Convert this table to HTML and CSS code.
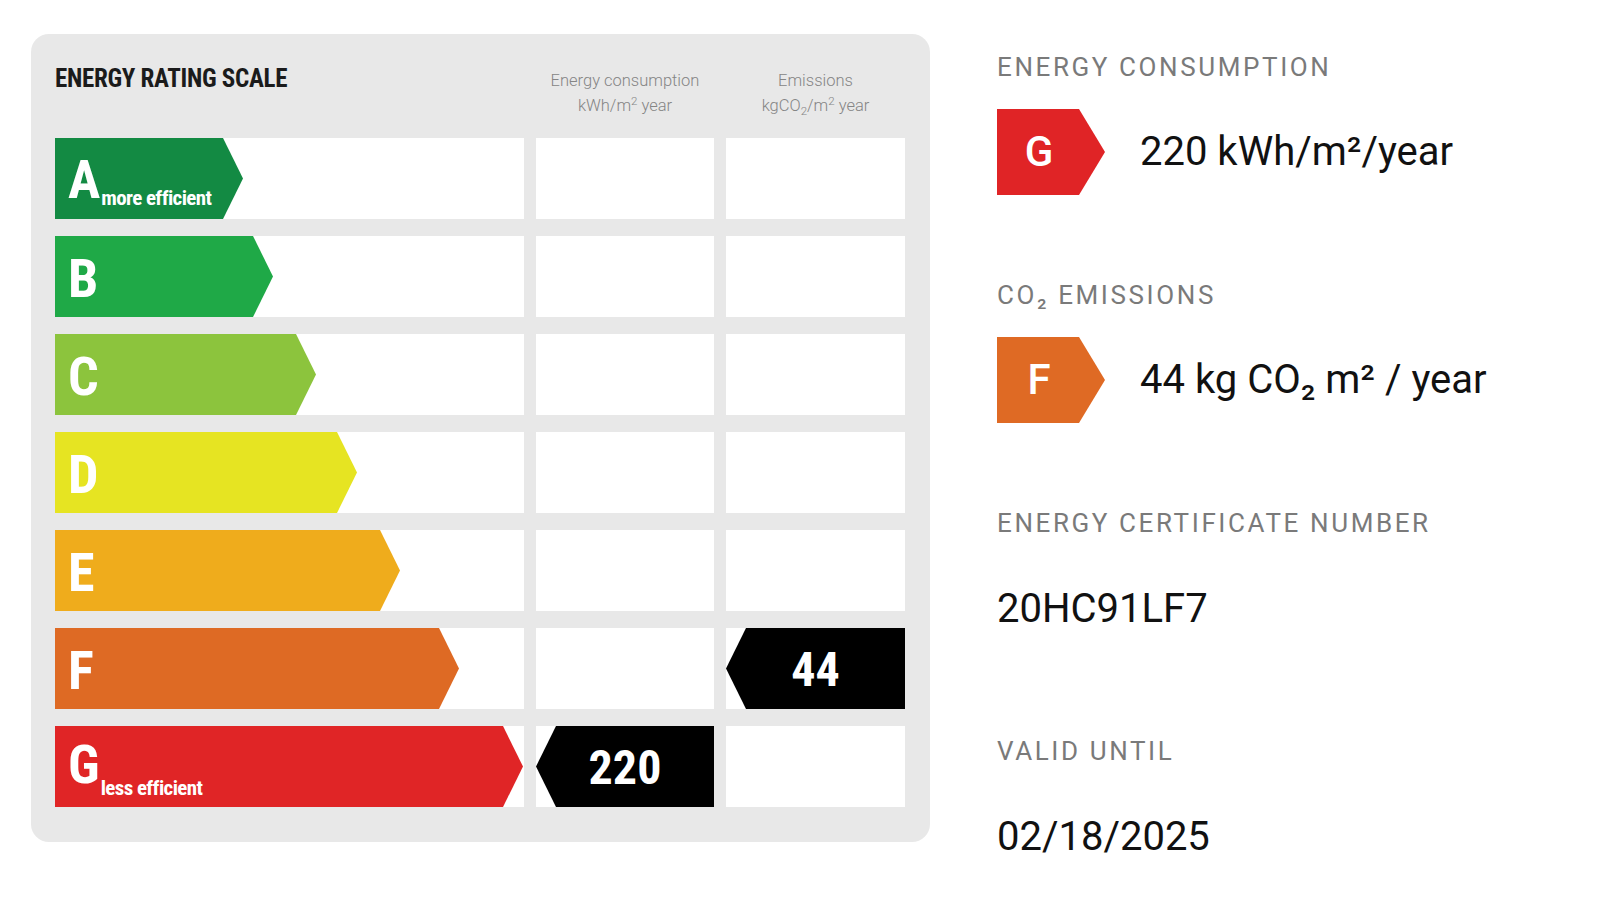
FILE: index.html
```html
<!DOCTYPE html>
<html lang="en">
<head>
<meta charset="utf-8">
<title>Energy rating</title>
<link rel="stylesheet" href="styles.css">
</head>
<body>
<div class="page">
  <section class="scale">
    <div class="scale-head">
      <h2 class="scale-title">ENERGY RATING SCALE</h2>
      <div class="col-head">Energy consumption<br>kWh/m<sup>2</sup> year</div>
      <div class="col-head">Emissions<br>kgCO<sub>2</sub>/m<sup>2</sup> year</div>
    </div>
    <div class="scale-grid">
      <div class="cell"><div class="bar bar-a"><div class="mark"><span class="grade">A</span><span class="note">more efficient</span></div></div></div>
      <div class="cell"></div>
      <div class="cell"></div>

      <div class="cell"><div class="bar bar-b"><div class="mark"><span class="grade">B</span></div></div></div>
      <div class="cell"></div>
      <div class="cell"></div>

      <div class="cell"><div class="bar bar-c"><div class="mark"><span class="grade">C</span></div></div></div>
      <div class="cell"></div>
      <div class="cell"></div>

      <div class="cell"><div class="bar bar-d"><div class="mark"><span class="grade">D</span></div></div></div>
      <div class="cell"></div>
      <div class="cell"></div>

      <div class="cell"><div class="bar bar-e"><div class="mark"><span class="grade">E</span></div></div></div>
      <div class="cell"></div>
      <div class="cell"></div>

      <div class="cell"><div class="bar bar-f"><div class="mark"><span class="grade">F</span></div></div></div>
      <div class="cell"></div>
      <div class="cell"><div class="tag">44</div></div>

      <div class="cell"><div class="bar bar-g"><div class="mark"><span class="grade">G</span><span class="note note-low">less efficient</span></div></div></div>
      <div class="cell"><div class="tag">220</div></div>
      <div class="cell"></div>
    </div>
  </section>

  <aside class="summary">
    <div class="info">
      <div class="label">ENERGY CONSUMPTION</div>
      <div class="reading">
        <div class="badge badge-g">G</div>
        <div class="value">220 kWh/m²/year</div>
      </div>
    </div>
    <div class="info">
      <div class="label">CO₂ EMISSIONS</div>
      <div class="reading">
        <div class="badge badge-f">F</div>
        <div class="value">44 kg CO₂ m² / year</div>
      </div>
    </div>
    <div class="info">
      <div class="label">ENERGY CERTIFICATE NUMBER</div>
      <div class="value value-plain">20HC91LF7</div>
    </div>
    <div class="info info-last">
      <div class="label">VALID UNTIL</div>
      <div class="value value-plain">02/18/2025</div>
    </div>
  </aside>
</div>
</body>
</html>
```

FILE: styles.css
```css
* { box-sizing: border-box; }

html, body {
  margin: 0;
  padding: 0;
  background: #ffffff;
}

body {
  font-family: Roboto, "Liberation Sans", sans-serif;
  color: #111;
}

.page {
  display: flex;
  align-items: flex-start;
  padding: 34px 0 0 31px;
}

/* ---------- rating scale panel ---------- */
.scale {
  width: 899px;
  background: #e8e8e8;
  border-radius: 18px;
  padding: 0 25px 35px 24px;
}

.scale-head {
  display: grid;
  grid-template-columns: 469px 178px 179px;
  column-gap: 12px;
  height: 104px;
  align-items: start;
}

.scale-title {
  margin: 0;
  padding-top: 29px;
  font-family: "Liberation Sans Narrow", "Roboto Condensed", "DejaVu Sans Condensed", "Liberation Sans", sans-serif;
  font-stretch: condensed;
  font-weight: 700;
  font-size: 25px;
  line-height: 32px;
  letter-spacing: -0.3px;
  color: #1b1b1b;
}

.col-head {
  padding-top: 34px;
  text-align: center;
  font-family: Roboto, "Liberation Sans", sans-serif;
  font-weight: 300;
  font-size: 16.5px;
  line-height: 25px;
  color: #858585;
}

.col-head sup,
.col-head sub {
  font-size: 0.7em;
  line-height: 0;
}

.scale-grid {
  display: grid;
  grid-template-columns: 469px 178px 179px;
  grid-auto-rows: 81px;
  column-gap: 12px;
  row-gap: 17px;
}

.cell {
  background: #ffffff;
}

.bar {
  height: 100%;
  display: flex;
  align-items: center;
  padding: 4px 0 0 13px;
  clip-path: polygon(0 0, calc(100% - 20px) 0, 100% 50%, calc(100% - 20px) 100%, 0 100%);
  color: #ffffff;
  font-family: "Liberation Sans Narrow", "Roboto Condensed", "DejaVu Sans Condensed", "Liberation Sans", sans-serif;
  font-stretch: condensed;
  font-weight: 700;
}

.bar-a { width: 188px; background: #138a43; }
.bar-b { width: 218px; background: #1fa947; }
.bar-c { width: 261px; background: #8cc43d; }
.bar-d { width: 302px; background: #e6e422; }
.bar-e { width: 345px; background: #efac1c; }
.bar-f { width: 404px; background: #de6a24; }
.bar-g { width: 468px; background: #e02526; }

.mark {
  line-height: 1;
  white-space: nowrap;
}

.grade {
  font-size: 54px;
  vertical-align: baseline;
}

.note {
  font-size: 21px;
  letter-spacing: -0.6px;
  vertical-align: -7px;
  margin-left: 1px;
}

.note-low {
  vertical-align: -12px;
}

.tag {
  height: 100%;
  display: flex;
  align-items: center;
  justify-content: center;
  padding-top: 2px;
  background: #000000;
  clip-path: polygon(20px 0, 100% 0, 100% 100%, 20px 100%, 0 50%);
  color: #ffffff;
  font-family: "Liberation Sans Narrow", "Roboto Condensed", "DejaVu Sans Condensed", "Liberation Sans", sans-serif;
  font-stretch: condensed;
  font-weight: 700;
  font-size: 48px;
  line-height: 1;
}

/* ---------- summary column ---------- */
.summary {
  margin-left: 67px;
  padding-top: 17px;
  display: flex;
  flex-direction: column;
}

.info {
  height: 228px;
}

.info-last {
  height: auto;
}

.label {
  font-family: Roboto, "Liberation Sans", sans-serif;
  font-weight: 400;
  font-size: 26px;
  line-height: 32px;
  letter-spacing: 2.6px;
  color: #7a7a7a;
  white-space: nowrap;
}

.reading {
  margin-top: 26px;
  display: flex;
  align-items: center;
  gap: 35px;
}

.badge {
  width: 108px;
  height: 86px;
  display: flex;
  align-items: center;
  justify-content: center;
  padding-right: 24px;
  clip-path: polygon(0 0, 82px 0, 100% 50%, 82px 100%, 0 100%);
  color: #ffffff;
  font-family: Roboto, "Liberation Sans", sans-serif;
  font-weight: 500;
  font-size: 42px;
  line-height: 1;
}

.badge-g { background: #e02426; }
.badge-f { background: #df6a24; }

.value {
  font-family: Roboto, "Liberation Sans", sans-serif;
  font-weight: 400;
  font-size: 40px;
  line-height: 40px;
  color: #111111;
  white-space: nowrap;
}

.value-plain {
  margin-top: 50px;
}
```
